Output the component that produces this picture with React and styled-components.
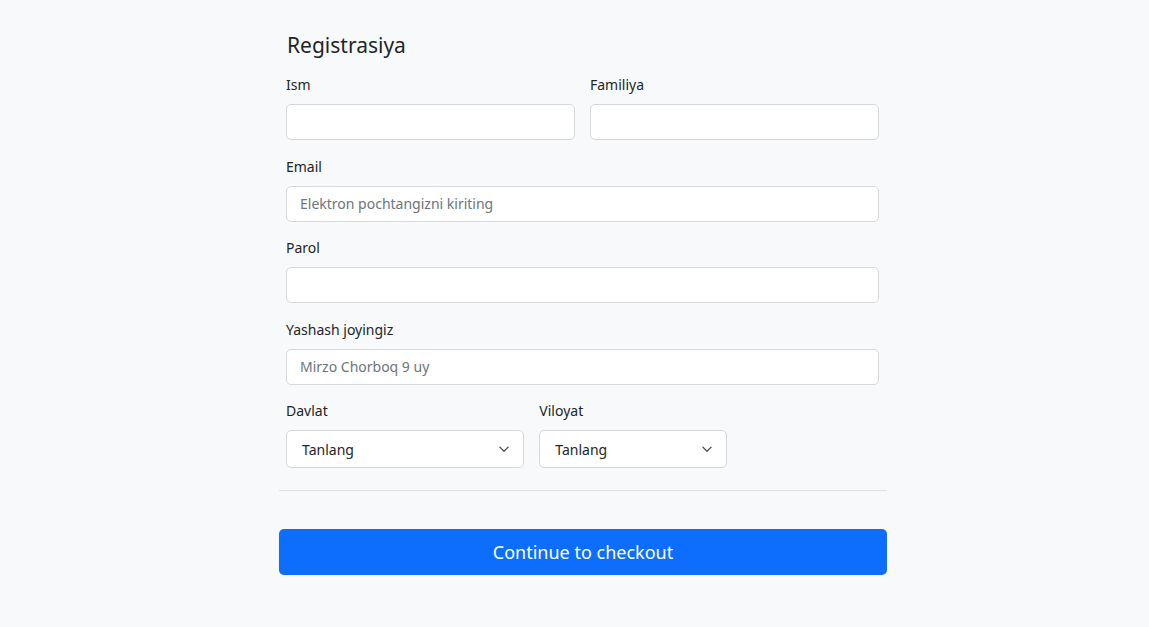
import React from "react";
import styled, { createGlobalStyle } from "styled-components";

const GlobalStyle = createGlobalStyle`
  html, body {
    margin: 0;
    padding: 0;
    background: #f8f9fa;
    font-family: "Noto Sans", "Open Sans", sans-serif;
    color: #212529;
  }
`;

const Page = styled.main`
  min-height: 627px;
  box-sizing: border-box;
  padding-top: 32px;
`;

const Container = styled.div`
  width: 608px;
  margin-left: calc(50% - 295.5px);
`;

const Heading = styled.h4`
  margin: 0 0 15px 8px;
  font-size: 21px;
  font-weight: 400;
  line-height: 27px;
`;

const Grid = styled.div`
  display: grid;
  grid-template-columns: repeat(12, 1fr);
  column-gap: 15px;
  row-gap: 15.5px;
  padding: 0 8px 0 7px;
`;

const Field = styled.div`
  grid-column: span ${(p) => p.span || 12};
  display: flex;
  flex-direction: column;
`;

const Label = styled.label`
  font-size: 14px;
  line-height: 22px;
  margin-bottom: 8px;
`;

const Input = styled.input`
  box-sizing: border-box;
  height: 36px;
  width: 100%;
  padding: 0 13px;
  font-family: inherit;
  font-size: 14px;
  color: #212529;
  background: #fff;
  border: 1px solid #d6d9dc;
  border-radius: 5px;
  outline: none;

  &::placeholder {
    color: #6c757d;
  }
`;

const SelectBox = styled.div`
  box-sizing: border-box;
  height: 38px;
  padding: 0 13px 0 15px;
  display: flex;
  align-items: center;
  justify-content: space-between;
  font-size: 14px;
  background: #fff;
  border: 1px solid #d6d9dc;
  border-radius: 5px;
`;

const Divider = styled.hr`
  margin: 22px 0 38px;
  border: 0;
  border-top: 1px solid #dfe2e5;
`;

const Button = styled.button`
  display: block;
  width: 100%;
  height: 46px;
  font-family: inherit;
  font-size: 18px;
  color: #fff;
  background: #0d6efd;
  border: 0;
  border-radius: 5px;
  cursor: pointer;
`;

function Chevron() {
  return (
    <svg width="12" height="12" viewBox="0 0 16 16" fill="none">
      <path d="M2.5 5.5l5.5 5.5 5.5-5.5" stroke="#495057" strokeWidth="1.8" strokeLinecap="round" strokeLinejoin="round" />
    </svg>
  );
}

function Select({ text }) {
  return (
    <SelectBox>
      <span>{text}</span>
      <Chevron />
    </SelectBox>
  );
}

export default function App() {
  return (
    <>
      <GlobalStyle />
      <Page>
        <Container>
          <Heading>Registrasiya</Heading>
          <Grid>
            <Field span={6}>
              <Label>Ism</Label>
              <Input />
            </Field>
            <Field span={6}>
              <Label>Familiya</Label>
              <Input />
            </Field>
            <Field>
              <Label>Email</Label>
              <Input placeholder="Elektron pochtangizni kiriting" />
            </Field>
            <Field>
              <Label>Parol</Label>
              <Input type="password" />
            </Field>
            <Field>
              <Label>Yashash joyingiz</Label>
              <Input placeholder="Mirzo Chorboq 9 uy" />
            </Field>
            <Field span={5}>
              <Label>Davlat</Label>
              <Select text="Tanlang" />
            </Field>
            <Field span={4}>
              <Label>Viloyat</Label>
              <Select text="Tanlang" />
            </Field>
          </Grid>
          <Divider />
          <Button>Continue to checkout</Button>
        </Container>
      </Page>
    </>
  );
}
